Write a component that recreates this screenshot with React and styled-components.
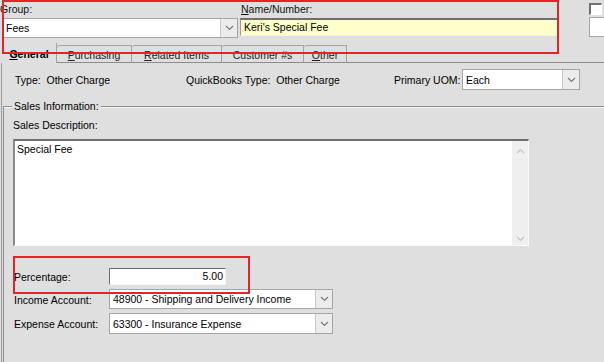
import React from "react";
import styled, { createGlobalStyle } from "styled-components";

const GlobalStyle = createGlobalStyle`
    html, body {
        margin: 0;
        padding: 0;
        background: #dfdfdf;
    }
    body {
        font-family: "Liberation Sans", Arial, sans-serif;
        font-size: 10.5px;
        color: #000;
    }
`;

function Chevron({ color = "#7a7a7a", up }) {
    return (
        <svg width="9" height="6" viewBox="0 0 9 6">
            <polyline
                points={up ? "1,5 4.5,1.5 8,5" : "1,1 4.5,4.5 8,1"}
                fill="none"
                stroke={color}
                strokeWidth="1.2"
            />
        </svg>
    );
}

function Combo({ value, width, height }) {
    return (
        <ComboBox $w={width} $h={height}>
            <ComboText>{value}</ComboText>
            <DropButton>
                <Chevron />
            </DropButton>
        </ComboBox>
    );
}

function App() {
    return (
        <>
            <GlobalStyle />
            <Window>
                <TopRow>
                    <Field>
                        <Label $shift={-2}>Group:</Label>
                        <Combo value="Fees" width={236} height={20} />
                    </Field>
                    <Field>
                        <Label $shift={1}>
                            <u>N</u>ame/Number:
                        </Label>
                        <NameInput>Keri's Special Fee</NameInput>
                    </Field>
                    <div />
                    <RightCol>
                        <CheckBox />
                        <BlankBox />
                    </RightCol>
                </TopRow>

                <TabStrip>
                    <Tab $w={55} $active>
                        <u>G</u>eneral
                    </Tab>
                    <Tab $w={75}>
                        <u>P</u>urchasing
                    </Tab>
                    <Tab $w={90}>
                        <u>R</u>elated Items
                    </Tab>
                    <Tab $w={82}>Customer #s</Tab>
                    <Tab $w={43}>
                        <u>O</u>ther
                    </Tab>
                    <TabFiller />
                </TabStrip>

                <Panel>
                    <TypeRow>
                        <TypeCell $w={171}>Type:&nbsp; Other Charge</TypeCell>
                        <TypeCell $w={208}>QuickBooks Type:&nbsp; Other Charge</TypeCell>
                        <TypeCell $w={68}>Primary UOM:</TypeCell>
                        <Combo value="Each" width={118} height={21} />
                    </TypeRow>

                    <GroupBox>
                        <Legend>Sales Information:</Legend>
                        <SubLabel>Sales Description:</SubLabel>
                        <TextArea>
                            <TextBody>Special Fee</TextBody>
                            <ScrollBar>
                                <Chevron color="#c4c4c4" up />
                                <Chevron color="#c4c4c4" />
                            </ScrollBar>
                        </TextArea>

                        <FormGrid>
                            <RowLabel>Percentage:</RowLabel>
                            <NumberInput>5.00</NumberInput>
                            <RowLabel>Income Account:</RowLabel>
                            <Combo
                                value="48900 - Shipping and Delivery Income"
                                width={224}
                                height={20}
                            />
                            <RowLabel>Expense Account:</RowLabel>
                            <Combo
                                value="63300 - Insurance Expense"
                                width={224}
                                height={21}
                            />
                        </FormGrid>
                    </GroupBox>
                </Panel>

                <Highlight $x={2} $y={0} $w={557} $h={54} />
                <Highlight $x={13} $y={256} $w={237} $h={38} />
            </Window>
        </>
    );
}

export default App;

const Window = styled.div`
    position: relative;
    width: 604px;
    height: 362px;
    overflow: hidden;
    background: #dfdfdf;
    padding-left: 1px;
    box-sizing: border-box;
`;
const TopRow = styled.div`
    display: grid;
    grid-template-columns: 236px 318px 1fr 15px;
    column-gap: 2px;
    padding-left: 1px;
    padding-top: 3px;
`;
const Field = styled.div`
    display: flex;
    flex-direction: column;
`;
const Label = styled.div`
    height: 15px;
    line-height: 13px;
    margin-left: ${(p) => p.$shift || 0}px;
    color: #111;
    u {
        text-decoration: underline;
    }
`;
const ComboBox = styled.div`
    display: flex;
    width: ${(p) => p.$w}px;
    height: ${(p) => p.$h}px;
    box-sizing: border-box;
    background: #fff;
    border: 1px solid #a5a5a5;
`;
const ComboText = styled.div`
    flex: 1;
    display: flex;
    align-items: center;
    padding-left: 3px;
    white-space: nowrap;
    overflow: hidden;
`;
const DropButton = styled.div`
    width: 16px;
    display: flex;
    align-items: center;
    justify-content: center;
    background: #ececec;
    border-left: 1px solid #c8c8c8;
`;
const NameInput = styled.div`
    height: 18px;
    box-sizing: border-box;
    background: #ffffca;
    border-top: 2px solid #6e6e6e;
    border-left: 1px solid #9a9a9a;
    border-right: 1px solid #f4f4f4;
    border-bottom: 1px solid #f4f4f4;
    padding-left: 3px;
    line-height: 15px;
    white-space: nowrap;
`;
const RightCol = styled.div`
    display: flex;
    flex-direction: column;
    align-items: flex-start;
    gap: 2px;
`;
const CheckBox = styled.div`
    width: 13px;
    height: 12px;
    box-sizing: border-box;
    background: #fff;
    border-top: 2px solid #707070;
    border-left: 2px solid #707070;
    border-right: 1px solid #fff;
    border-bottom: 1px solid #fff;
`;
const BlankBox = styled.div`
    width: 16px;
    height: 20px;
    box-sizing: border-box;
    background: #fff;
    border: 1px solid #a5a5a5;
    border-right: none;
`;
const TabStrip = styled.div`
    display: flex;
    align-items: flex-end;
    height: 20px;
    margin-top: 5px;
    padding-left: 1px;
`;
const Tab = styled.div`
    width: ${(p) => p.$w}px;
    height: ${(p) => (p.$active ? 20 : 18)}px;
    box-sizing: border-box;
    display: flex;
    align-items: center;
    justify-content: center;
    padding-top: ${(p) => (p.$active ? 2 : 1)}px;
    font-weight: ${(p) => (p.$active ? "bold" : "normal")};
    color: ${(p) => (p.$active ? "#000" : "#222")};
    border-right: 1px solid #a3a3a3;
    border-top-left-radius: 3px;
    border-bottom: ${(p) => (p.$active ? "none" : "1px solid #8c8c8c")};
    border-top: ${(p) => (p.$active ? "none" : "1px solid #a3a3a3")};
    white-space: nowrap;
`;
const TabFiller = styled.div`
    flex: 1;
    border-bottom: 1px solid #8c8c8c;
`;
const Panel = styled.div`
    border-left: 1px solid #9a9a9a;
    padding-left: 1px;
    padding-top: 6px;
    height: 300px;
`;
const TypeRow = styled.div`
    display: flex;
    align-items: center;
    padding-left: 12px;
`;
const TypeCell = styled.div`
    width: ${(p) => p.$w}px;
    white-space: nowrap;
`;
const GroupBox = styled.div`
    margin-top: 16px;
    border-top: 1px solid #8e8e8e;
    box-shadow: inset 0 1px 0 #f6f6f6;
    border-left: 1px solid #8e8e8e;
    padding-left: 9px;
    height: 260px;
`;
const Legend = styled.div`
    width: fit-content;
    margin-top: -7px;
    margin-left: -1px;
    padding: 0 2px;
    background: #dfdfdf;
    line-height: 13px;
`;
const SubLabel = styled.div`
    margin-top: 6px;
    line-height: 13px;
`;
const TextArea = styled.div`
    display: flex;
    width: 516px;
    height: 107px;
    margin-top: 7px;
    box-sizing: border-box;
    background: #fff;
    border-top: 2px solid #6e6e6e;
    border-left: 2px solid #8a8a8a;
    border-right: 1px solid #fafafa;
    border-bottom: 1px solid #fafafa;
`;
const TextBody = styled.div`
    flex: 1;
    padding: 2px 2px;
    line-height: 13px;
`;
const ScrollBar = styled.div`
    width: 16px;
    background: #efefef;
    display: flex;
    flex-direction: column;
    align-items: center;
    justify-content: space-between;
    padding: 7px 0 3px;
`;
const FormGrid = styled.div`
    display: grid;
    grid-template-columns: 95px auto;
    grid-template-rows: 17px 20px 21px;
    row-gap: 4px;
    align-items: center;
    justify-content: start;
    margin-top: 22px;
    padding-left: 1px;
`;
const RowLabel = styled.div`
    white-space: nowrap;
    line-height: 13px;
    padding-top: 2px;
`;
const NumberInput = styled.div`
    width: 117px;
    height: 17px;
    box-sizing: border-box;
    background: #fff;
    border-top: 1px solid #6e6e6e;
    border-left: 1px solid #6e6e6e;
    border-right: 1px solid #f4f4f4;
    border-bottom: 1px solid #f4f4f4;
    text-align: right;
    padding-right: 2px;
    line-height: 15px;
`;
const Highlight = styled.div`
    position: absolute;
    left: ${(p) => p.$x}px;
    top: ${(p) => p.$y}px;
    width: ${(p) => p.$w}px;
    height: ${(p) => p.$h}px;
    box-sizing: border-box;
    border: 2px solid #e5232b;
    pointer-events: none;
`;
